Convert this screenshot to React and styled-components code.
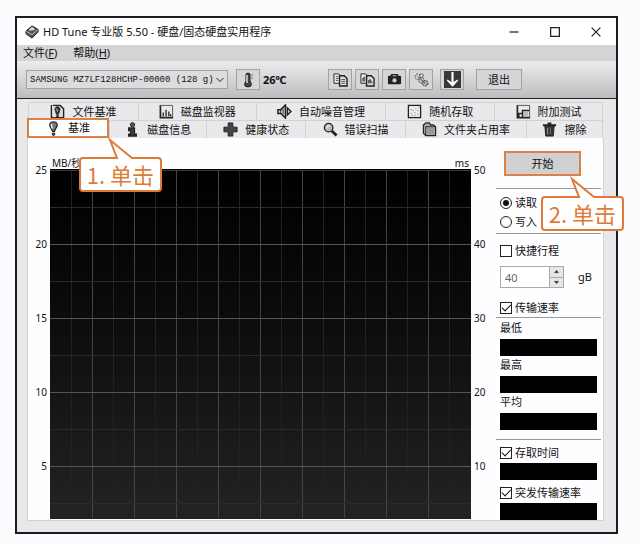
import React from 'react'
import styled, { createGlobalStyle, css } from "styled-components"

const GlobalStyle = createGlobalStyle`
    * {
        box-sizing: border-box;
    }
    body {
        margin: 0;
        background: #fcfbfe;
        color: #111;
        font-family: "Noto Sans", "Noto Sans CJK SC", sans-serif;
        font-size: 11px;
        line-height: 16px;
    }
    button, input, select {
        margin: 0;
        padding: 0;
        font: inherit;
        color: inherit;
    }
`
const Window = styled.div`
    margin: 16px 22px 10px 15px;
    border: 2px solid #1c1c20;
    background: #e8e7ea;
`
const TitleBar = styled.header`
    display: flex;
    align-items: center;
    height: 27px;
    padding-left: 8px;
    background: #fff;
`
const Title = styled.h1`
    flex: 1;
    margin: 0 0 0 4px;
    font-size: 11px;
    font-weight: 400;
    white-space: nowrap;
`
const WindowButton = styled.button`
    display: flex;
    align-items: center;
    justify-content: center;
    width: 41px;
    height: 26px;
    border: none;
    background: none;
`
const MenuBar = styled.nav`
    display: flex;
    gap: 16px;
    height: 16px;
    padding-left: 6px;
    background: #d4d3d5;
`
const MenuItem = styled.button`
    border: none;
    background: none;
    line-height: 16px;
`
const ToolBar = styled.div`
    display: flex;
    align-items: center;
    height: 38px;
    padding: 0 9px;
    border-bottom: 1px solid #222;
    background: linear-gradient(#ecebed, #bdbcbe);
`
const DriveBox = styled.div`
    display: grid;
    grid-template-columns: 202px;
    align-items: center;
    margin-right: 8px;

    > * {
        grid-area: 1 / 1;
    }
    > svg {
        justify-self: end;
        margin-right: 4px;
        pointer-events: none;
    }
`
const DriveSelect = styled.select`
    appearance: none;
    height: 19px;
    padding: 0 14px 0 3px;
    border: 1px solid #a2a1a4;
    border-radius: 0;
    background: #dcdbdd;
    font-family: "Liberation Mono", monospace;
    font-size: 9px;
`
const ToolGroup = styled.div`
    display: flex;
    gap: 3px;
    margin-right: ${({ $after }) => $after}px;
`
const ToolButton = styled.button`
    display: flex;
    align-items: center;
    justify-content: center;
    width: ${({ $wide }) => ($wide ? 46 : 24)}px;
    height: 21px;
    border: 1px solid #a2a1a4;
    background: #d6d5d7;
`
const Temperature = styled.span`
    flex: 0 1 65px;
    margin-left: 3px;
    font-family: "Noto Sans", "Noto Sans CJK SC", sans-serif;
    font-weight: 700;
`
const Body = styled.main`
    padding: 3px 12px 11px 10px;
`
const TabRow = styled.div`
    display: flex;
    height: 18px;
    padding: 0 1px;
`
const Tab = styled.button`
    position: relative;
    display: flex;
    flex: ${({ $size }) => $size} 1 0;
    align-items: center;
    justify-content: center;
    gap: 7px;
    height: 18px;
    border: 1px solid #d2d1d4;
    border-width: 1px 0 0 1px;
    background: #e9e8eb;
    white-space: nowrap;

    &:last-child {
        border-right-width: 1px;
    }
    ${({ $active }) => $active && css`
        z-index: 1;
        height: 20px;
        margin: -2px 0 0 -1px;
        border: 2px solid #d98246;
        background: #fff;
    `}
`
const Panel = styled.section`
    display: flex;
    padding-right: 2px;
    border: 1px solid #d2d1d4;
    border-top: none;
    background: #fefdff;
`
const Axis = styled.div`
    display: flex;
    flex-direction: column;
    gap: 60px;
    width: ${({ $right }) => ($right ? 25 : 22)}px;
    padding: 25px 3px 0;
    font-size: 10px;
    line-height: 14px;
    text-align: ${({ $right }) => ($right ? "left" : "right")};
`
const Chart = styled.div`
    flex: 1;
    min-width: 0;
    padding-bottom: 1px;

    svg {
        display: block;
        width: 100%;
        height: 350px;
    }
`
const Units = styled.div`
    display: flex;
    align-items: flex-end;
    justify-content: space-between;
    height: 31px;
    padding: 0 2px;
    font-size: 10px;
    line-height: 12px;
`
const Side = styled.aside`
    width: 105px;
`
const StartArea = styled.div`
    position: relative;
    padding: 13px 0 12px 8px;
`
const StartButton = styled.button`
    display: block;
    width: 77px;
    height: 25px;
    border: 2px solid #d98246;
    background: #d0cfd1;
`
const Group = styled.div`
    display: flex;
    flex-direction: column;
    gap: ${({ $gap }) => $gap}px;
    padding: ${({ $pad }) => $pad};
    border-top: 1px solid #999;
`
const Choice = styled.label`
    display: flex;
    align-items: center;
    gap: 3px;
    height: 16px;
    padding-left: 4px;
    white-space: nowrap;
`
const Check = styled.input`
    appearance: none;
    display: grid;
    place-content: center;
    flex: none;
    width: 12px;
    height: 12px;
    border: 1px solid #222;
    background: #fff;

    &[type="radio"] {
        border-radius: 50%;
    }
    &[type="radio"]:checked::before {
        content: "";
        width: 6px;
        height: 6px;
        border-radius: 50%;
        background: #111;
    }
    &[type="checkbox"]:checked::before {
        content: "";
        width: 8px;
        height: 4px;
        margin-bottom: 3px;
        border: solid #111;
        border-width: 0 0 1px 1px;
        transform: rotate(-45deg);
    }
`
const StrokeRow = styled.div`
    display: flex;
    align-items: center;
    height: 22px;
    margin: 0 0 5px 4px;
`
const NumberBox = styled.input`
    appearance: textfield;
    width: 50px;
    height: 22px;
    padding-left: 4px;
    border: 1px solid #aaa;
    border-radius: 0;
    background: #fff;
    color: #666;

    &::-webkit-inner-spin-button {
        appearance: none;
    }
`
const Spinner = styled.div`
    display: grid;
    width: 14px;
    height: 22px;
    margin-right: 14px;
`
const SpinButton = styled.button`
    display: flex;
    align-items: center;
    justify-content: center;
    border: 1px solid #aaa;
    border-left: none;
    background: #e6e5e8;

    & + & {
        border-top: none;
    }
`
const Field = styled.div`
    display: flex;
    flex-direction: column;
    gap: ${({ $gap }) => $gap || 3}px;
`
const FieldLabel = styled.div`
    height: 16px;
    padding-left: 4px;
`
const Meter = styled.output`
    display: block;
    height: 17px;
    margin: 0 4px;
    background: #000;
`
const Callout = styled.div`
    position: absolute;
    z-index: 2;
    left: ${({ $left }) => $left}px;
    top: ${({ $top }) => $top}px;
    width: 83px;
    height: 35px;
    border: 2px solid #df7b38;
    border-radius: 4px;
    background: #fff;
    color: #df7b38;
    font-family: "Noto Sans CJK SC", sans-serif;
    font-size: 22px;
    font-weight: 400;
    line-height: 31px;
    text-align: center;
    white-space: nowrap;

    svg {
        position: absolute;
        left: 26px;
        top: -22px;
    }
`

const Bubble = ({ left, top, children }) => (
    <Callout $left={left} $top={top}>
        <svg width="28" height="24" viewBox="0 0 28 24">
            <path d="M9 21 3 3 26 21V24H9Z" fill="#fff" />
            <path d="M8 21H10L3 3 25 21H28" fill="none" stroke="#df7b38" strokeWidth="2" />
        </svg>
        {children}
    </Callout>
)

const Icon = ({ size = 16, children }) => (
    <svg width={size} height={size} viewBox="0 0 16 16" fill="none" stroke="#222" aria-hidden="true">
        {children}
    </svg>
)

const icons = {
    app: <>
        <path d="M1 7 8 1 15 5 9 14Z" fill="#333" />
        <path d="M4 6 8 2 12 5 8 8Z" fill="#ddd" stroke="none" />
        <path d="M1 7V10L8 15 15 8V5" fill="#555" />
        <path d="M1 7 8 11 15 5" stroke="#ccc" />
    </>,
    fileBench: <>
        <path d="M3 1.500H11L14.500 5V14.500H5" fill="#ddd" strokeWidth="1.5" />
        <path d="M1.500 1V14L5 15" strokeWidth="1.5" />
        <path d="M8 3C5 3 5 6 6 8L7 11H9L10 8C11 6 11 3 8 3Z" fill="#333" />
        <path d="M7 5 8 8" stroke="#ddd" />
        <circle cx="8" cy="13" r="1" fill="#222" />
    </>,
    monitor: <>
        <path d="M1.500 1V14.500H15" strokeWidth="1.8" />
        <path d="M1 1.500H14.500V14" stroke="#555" />
        <path d="M4.500 13V9M7.500 13V6M10.500 13V8M12.500 13V11" strokeWidth="1.4" />
    </>,
    noise: <>
        <path d="M1 6H4L9 1V15L4 10H1Z" fill="#ddd" strokeWidth="1.6" />
        <path d="M4 6V10M6.500 5V11" />
        <path d="M11 4 15 8 11 12Z" fill="#bbb" strokeWidth="1.4" />
    </>,
    random: <>
        <rect x="1.5" y="1.5" width="13" height="13" fill="#eee" strokeWidth="1.4" />
        <path d="M4 10h1M6 7h1M5 12h1M8 9h1M9 5h1M11 7h1M11 11h1M12 4h1M8 12h1M4 6h1" stroke="#666" />
    </>,
    extra: <>
        <path d="M1.500 1V14.500H15" strokeWidth="1.8" />
        <path d="M1 1.500H14.500V14" stroke="#555" />
        <path d="M3 14V10H7V14M7 10V7H14" strokeWidth="1.6" />
        <path d="M8 8H13V13H8Z" fill="#bbb" stroke="none" />
    </>,
    bench: <>
        <path d="M8 1C4 1 3 4 5 7L7 11H9L11 7C13 4 12 1 8 1Z" fill="#777" strokeWidth="1.3" />
        <path d="M6 3Q5 5 7 8" stroke="#fff" strokeWidth="1.5" />
        <circle cx="8" cy="14" r="1.400" fill="#555" />
    </>,
    info: <>
        <circle cx="8" cy="3" r="2.3" fill="#555" />
        <path d="M4 6.500H10V13H12V15H4V13H6V9H4Z" fill="#444" strokeWidth="1.6" />
    </>,
    health: <path d="M5.500 1H10.500V5.500H15V10.500H10.500V15H5.500V10.500H1V5.500H5.500Z" fill="#444" />,
    scan: <>
        <circle cx="6" cy="6" r="4.5" fill="#bbb" strokeWidth="1.4" />
        <path d="M4 7Q4 4 7 4" stroke="#fff" />
        <path d="M9.500 9.500 14.500 14.500" strokeWidth="3" />
    </>,
    folder: <>
        <path d="M2 3 4 1H8L9 3H12L14.500 5V14.500H4L1.500 12V3Z" fill="#aaa" strokeWidth="1.3" />
        <path d="M4 14V5H14" />
        <path d="M5 6H13V13H5Z" fill="#999" stroke="none" />
    </>,
    trash: <>
        <path d="M1 3.500H15M6 1.500H10" strokeWidth="2" />
        <path d="M3 4H13L12 15H4Z" fill="#333" />
        <path d="M6 6V13" stroke="#aaa" />
        <path d="M9 6V13" stroke="#777" />
    </>,
    thermometer: <>
        <path d="M6 2Q8 0 10 2V9Q12 11 11 14Q8 16 5 14Q4 11 6 9Z" fill="#444" />
        <path d="M7 3V11" stroke="#ddd" strokeWidth="1.5" />
        <path d="M11 3h2M11 6h2" stroke="#777" />
    </>,
    copyText: <>
        <path d="M1 2H6L8 4V12H1Z" fill="#eee" />
        <path d="M7 4H12L15 7V15H7Z" fill="#ddd" strokeWidth="1.5" />
        <path d="M3 5H6M3 7H6M3 9H6M9 8H13M9 10H13M9 12H13" stroke="#555" />
    </>,
    copyImage: <>
        <path d="M1 2H6L8 4V12H1Z" fill="#eee" />
        <path d="M7 4H12L15 7V15H7Z" fill="#ddd" strokeWidth="1.5" />
        <path d="M3 10V7L5 5V10M9 12V9L11 8 13 12" fill="#666" stroke="#555" />
    </>,
    camera: <>
        <path d="M2 5H5V3H11V5H14V12H2Z" fill="#222" strokeLinejoin="round" strokeWidth="2" />
        <circle cx="8" cy="9" r="2.3" fill="#ccc" stroke="none" />
        <path d="M6 4H10" stroke="#ccc" />
    </>,
    options: <>
        <circle cx="4" cy="5" r="3" fill="#ccc" stroke="#555" strokeDasharray="2 1" />
        <circle cx="8" cy="4" r="2" fill="#ddd" stroke="#555" />
        <circle cx="8" cy="9" r="3" fill="#bbb" stroke="#444" strokeDasharray="2 1" />
        <circle cx="12" cy="12" r="3" fill="#aaa" stroke="#333" strokeDasharray="2 1" />
        <path d="M4 5 12 12" stroke="#555" />
    </>,
    save: <>
        <rect width="16" height="16" fill="#383838" stroke="none" />
        <path d="M8 1V12" stroke="#fff" strokeWidth="2" />
        <path d="M3 8.500 8 14 13 8.500 9 11H7Z" fill="#fff" stroke="#fff" />
    </>,
}

const topTabs = [
    { icon: "fileBench", label: "文件基准", size: 110 },
    { icon: "monitor", label: "磁盘监视器", size: 118 },
    { icon: "noise", label: "自动噪音管理", size: 130 },
    { icon: "random", label: "随机存取", size: 109 },
    { icon: "extra", label: "附加测试", size: 108 },
]
const bottomTabs = [
    { icon: "bench", label: "基准", size: 79, active: true },
    { icon: "info", label: "磁盘信息", size: 97 },
    { icon: "health", label: "健康状态", size: 99 },
    { icon: "scan", label: "错误扫描", size: 100 },
    { icon: "folder", label: "文件夹占用率", size: 121 },
    { icon: "trash", label: "擦除", size: 76 },
]
const tools = [
    { icon: "copyText", label: "复制文本" },
    { icon: "copyImage", label: "复制图像" },
    { icon: "camera", label: "截图" },
    { icon: "options", label: "选项" },
]

const Tabs = ({ items }) => (
    <TabRow role="tablist">
        {items.map(({ icon, label, size, active }) => (
            <Tab key={label} role="tab" aria-selected={!!active} $size={size} $active={active}>
                <Icon size={15}>{icons[icon]}</Icon>
                {label}
                {active && <Bubble left={50} top={37}>1. 单击</Bubble>}
            </Tab>
        ))}
    </TabRow>
)

const Grid = () => (
    <svg viewBox="0 0 421 350" preserveAspectRatio="none">
        <defs>
            <linearGradient id="plot" x1="0" y1="0" x2="0" y2="1">
                <stop offset="0" stopColor="#000" />
                <stop offset="0.4" stopColor="#0b0b0b" />
                <stop offset="1" stopColor="#232323" />
            </linearGradient>
        </defs>
        <rect width="421" height="350" fill="url(#plot)" />
        {Array.from({ length: 19 }, (_, i) => (
            <rect key={i} x={(i + 1) * 21} y="1" width="1" height="348" fill={i % 2 ? "#444" : "#222"} />
        ))}
        {Array.from({ length: 9 }, (_, i) => (
            <rect key={i} y={(i + 1) * 37 + 1} width="421" height="1" fill={i % 2 ? "#555" : "#2b2b2b"} />
        ))}
        <rect y="1" width="421" height="1" fill="#3a3a3a" />
    </svg>
)

const App = () => {
    return (
        <>
            <GlobalStyle />
            <Window>
                <TitleBar>
                    <Icon size={14}>{icons.app}</Icon>
                    <Title>HD Tune 专业版 5.50 - 硬盘/固态硬盘实用程序</Title>
                    <WindowButton aria-label="最小化">
                        <Icon size={10}><path d="M1 8H15" strokeWidth="2" /></Icon>
                    </WindowButton>
                    <WindowButton aria-label="最大化">
                        <Icon size={10}><rect x="1" y="1" width="14" height="14" strokeWidth="2" /></Icon>
                    </WindowButton>
                    <WindowButton aria-label="关闭">
                        <Icon size={10}><path d="M1 1 15 15M15 1 1 15" strokeWidth="2" /></Icon>
                    </WindowButton>
                </TitleBar>
                <MenuBar>
                    <MenuItem>文件(<u>F</u>)</MenuItem>
                    <MenuItem>帮助(<u>H</u>)</MenuItem>
                </MenuBar>
                <ToolBar>
                    <DriveBox>
                        <DriveSelect aria-label="硬盘">
                            <option>SAMSUNG MZ7LF128HCHP-00000 (128 g)</option>
                        </DriveSelect>
                        <Icon size={8}><path d="M1 4 8 11 15 4" strokeWidth="2" /></Icon>
                    </DriveBox>
                    <ToolButton aria-label="温度"><Icon>{icons.thermometer}</Icon></ToolButton>
                    <Temperature>26℃</Temperature>
                    <ToolGroup $after={7}>
                        {tools.map(({ icon, label }) => (
                            <ToolButton key={icon} aria-label={label}>
                                <Icon size={15}>{icons[icon]}</Icon>
                            </ToolButton>
                        ))}
                    </ToolGroup>
                    <ToolGroup $after={12}>
                        <ToolButton aria-label="保存"><Icon size={17}>{icons.save}</Icon></ToolButton>
                    </ToolGroup>
                    <ToolButton $wide>退出</ToolButton>
                </ToolBar>
                <Body>
                    <Tabs items={topTabs} />
                    <Tabs items={bottomTabs} />
                    <Panel>
                        <Axis>
                            {[25, 20, 15, 10, 5].map((n) => <span key={n}>{n}</span>)}
                        </Axis>
                        <Chart>
                            <Units>
                                <span>MB/秒</span>
                                <span>ms</span>
                            </Units>
                            <Grid />
                        </Chart>
                        <Axis $right>
                            {[50, 40, 30, 20, 10].map((n) => <span key={n}>{n}</span>)}
                        </Axis>
                        <Side>
                            <StartArea>
                                <StartButton>开始</StartButton>
                                <Bubble left={45} top={58}>2. 单击</Bubble>
                            </StartArea>
                            <Group $gap={3} $pad="6px 0 3px">
                                <Choice><Check type="radio" name="mode" defaultChecked />读取</Choice>
                                <Choice><Check type="radio" name="mode" />写入</Choice>
                            </Group>
                            <Group $gap={7} $pad="9px 0 1px">
                                <Choice><Check type="checkbox" />快捷行程</Choice>
                                <StrokeRow>
                                    <NumberBox id="stroke" type="number" defaultValue={40} />
                                    <Spinner>
                                        <SpinButton aria-label="增加">
                                            <Icon size={5}><path d="M1 12 8 4 15 12Z" fill="#333" /></Icon>
                                        </SpinButton>
                                        <SpinButton aria-label="减少">
                                            <Icon size={5}><path d="M1 4 8 12 15 4Z" fill="#333" /></Icon>
                                        </SpinButton>
                                    </Spinner>
                                    <label htmlFor="stroke">gB</label>
                                </StrokeRow>
                                <Choice><Check type="checkbox" defaultChecked />传输速率</Choice>
                            </Group>
                            <Group $gap={1} $pad="2px 0 9px">
                                {["最低", "最高", "平均"].map((label) => (
                                    <Field key={label}>
                                        <FieldLabel>{label}</FieldLabel>
                                        <Meter aria-label={label} />
                                    </Field>
                                ))}
                            </Group>
                            <Group $gap={5} $pad="5px 0 0">
                                {["存取时间", "突发传输速率"].map((label) => (
                                    <Field key={label} $gap={2}>
                                        <Choice><Check type="checkbox" defaultChecked />{label}</Choice>
                                        <Meter aria-label={label} />
                                    </Field>
                                ))}
                            </Group>
                        </Side>
                    </Panel>
                </Body>
            </Window>
        </>
    )
}

export default App
